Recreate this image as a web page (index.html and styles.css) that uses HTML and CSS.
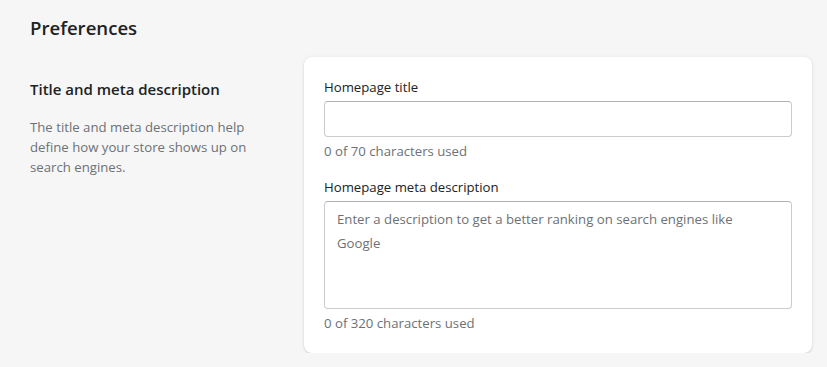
FILE: index.html
```html
<!DOCTYPE html>
<html lang="en">
<head>
    <meta charset="UTF-8">
    <meta name="viewport" content="width=device-width, initial-scale=1.0">
    <title>Preferences</title>
    <link rel="stylesheet" href="styles.css">
</head>
<body>

<h1 class="page-title">Preferences</h1>

<div class="layout">
    <div class="section-info">
        <h2>Title and meta description</h2>
        <p>The title and meta description help define how your store shows up on search engines.</p>
    </div>

    <div class="card">
        <div class="field">
            <label for="homeTitle">Homepage title</label>
            <input type="text" id="homeTitle" class="text-input">
            <div class="help">0 of 70 characters used</div>
        </div>

        <div class="field">
            <label for="homeDesc">Homepage meta description</label>
            <textarea id="homeDesc" class="text-input area" placeholder="Enter a description to get a better ranking on search engines like Google"></textarea>
            <div class="help">0 of 320 characters used</div>
        </div>
    </div>
</div>

</body>
</html>
```

FILE: styles.css
```css
body {
    margin: 0;
    padding: 14px 15px 0 30px;
    font-family: "Open Sans", "Noto Sans", sans-serif;
    font-size: 13.2px;
    color: #202223;
    background-color: #f6f6f7;
}

.page-title {
    margin: 0;
    font-size: 18.6px;
    line-height: 28px;
    font-weight: 600;
}

.layout {
    display: flex;
    gap: 20px;
    margin-top: 15px;
}

.section-info {
    width: 254px;
    padding-top: 20px;
}

.section-info h2 {
    margin: 0;
    font-size: 15px;
    line-height: 24px;
    font-weight: 600;
}

.section-info p {
    margin: 16px 0 0;
    line-height: 20px;
    color: #6d7175;
}

/* Karta z polji */
.card {
    flex: 1;
    background: white;
    border-radius: 8px;
    padding: 20px 20px 20px;
    box-shadow: 0 0 5px rgba(23, 24, 24, 0.05), 0 1px 2px rgba(0, 0, 0, 0.15);
}

.field + .field {
    margin-top: 16px;
}

.field label {
    display: block;
    line-height: 20px;
    margin-bottom: 4px;
}

.text-input {
    display: block;
    box-sizing: border-box;
    width: 100%;
    height: 36px;
    border: 1px solid #c9cccf;
    border-top-color: #aeb4b9;
    border-radius: 4px;
    padding: 5px 12px;
    font: inherit;
    color: #202223;
    background: white;
}

.text-input.area {
    height: 108px;
    resize: none;
    line-height: 24px;
}

.text-input::placeholder {
    color: #6d7175;
}

.help {
    margin-top: 4px;
    line-height: 20px;
    color: #6d7175;
}
```
